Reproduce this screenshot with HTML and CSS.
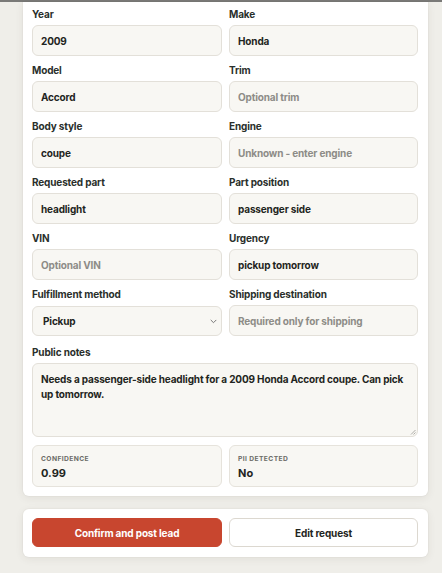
FILE: index.html
```html
<!DOCTYPE html>
<html>
<head>
<meta charset="utf-8">
<link rel="stylesheet" href="styles.css">
</head>
<body>
<div class="topline"></div>
<main class="page">
  <section class="card form-card">
    <div class="grid">
      <div class="field"><label class="label">Year</label><input class="input" value="2009"></div>
      <div class="field"><label class="label">Make</label><input class="input" value="Honda"></div>
      <div class="field"><label class="label">Model</label><input class="input" value="Accord"></div>
      <div class="field"><label class="label">Trim</label><input class="input" placeholder="Optional trim"></div>
      <div class="field"><label class="label">Body style</label><input class="input" value="coupe"></div>
      <div class="field"><label class="label">Engine</label><input class="input" placeholder="Unknown - enter engine"></div>
      <div class="field"><label class="label">Requested part</label><input class="input" value="headlight"></div>
      <div class="field"><label class="label">Part position</label><input class="input" value="passenger side"></div>
      <div class="field"><label class="label">VIN</label><input class="input" placeholder="Optional VIN"></div>
      <div class="field"><label class="label">Urgency</label><input class="input" value="pickup tomorrow"></div>
      <div class="field"><label class="label">Fulfillment method</label>
        <div class="select">
          <span>Pickup</span>
          <svg class="chev" width="7" height="5" viewBox="0 0 7 5"><path d="M1 1.2 L3.5 3.7 L6 1.2" fill="none" stroke="#777" stroke-width="1" stroke-linecap="round" stroke-linejoin="round"/></svg>
        </div>
      </div>
      <div class="field"><label class="label">Shipping destination</label><input class="input" placeholder="Required only for shipping"></div>
      <div class="field full notes"><label class="label">Public notes</label>
        <div class="textarea">Needs a passenger-side headlight for a 2009 Honda Accord coupe. Can pick up tomorrow.
          <svg class="grip" width="6" height="6" viewBox="0 0 6 6"><path d="M5.5 1 L1 5.5 M5.5 3.5 L3.5 5.5" stroke="#9a9a95" stroke-width="0.8"/></svg>
        </div>
      </div>
      <div class="stat"><div class="stat-label">Confidence</div><div class="stat-value">0.99</div></div>
      <div class="stat"><div class="stat-label">PII detected</div><div class="stat-value">No</div></div>
    </div>
  </section>
  <section class="card actions">
    <button class="btn primary">Confirm and post lead</button>
    <button class="btn secondary">Edit request</button>
  </section>
</main>
</body>
</html>
```
FILE: styles.css
```css
* { box-sizing: border-box; }
html, body { margin: 0; padding: 0; }
body {
  background: #efeee9;
  font-family: Inter, "Noto Sans", sans-serif;
  color: #1f2521;
  width: 442px;
  height: 573px;
  overflow: hidden;
}
.topline {
  height: 2px;
  background: #7a7a78;
}
.page {
  padding-left: 23px;
  width: 428px;
}
.card {
  background: #ffffff;
  border-radius: 6px;
  box-shadow: 0 2px 8px rgba(60, 55, 40, 0.08), 0 0 0 1px rgba(0, 0, 0, 0.02);
}
.form-card {
  border-top-left-radius: 0;
  border-top-right-radius: 0;
  padding: 5px 10px 9px 9px;
}
.grid {
  display: grid;
  grid-template-columns: 190px 1fr;
  column-gap: 7px;
  row-gap: 7px;
}
.field {
  display: flex;
  flex-direction: column;
  gap: 4px;
}
.full { grid-column: 1 / -1; }
.notes { margin-top: 2px; }
.label {
  font-size: 10px;
  line-height: 14px;
  font-weight: 700;
  letter-spacing: -0.15px;
  color: #2a2f2b;
}
.input, .select, .textarea {
  height: 31px;
  border: 1px solid #e3e0d9;
  border-radius: 6px;
  background: #f8f7f3;
  font-family: inherit;
  font-size: 10px;
  letter-spacing: -0.15px;
  font-weight: 700;
  color: #1f2521;
  padding: 0 8px;
  width: 100%;
  outline: none;
}
.input::placeholder {
  color: #8d8c87;
  font-weight: 700;
  opacity: 1;
}
.select {
  height: 30px;
  margin-top: 1px;
  display: flex;
  align-items: center;
  justify-content: space-between;
  padding: 0 4px 0 10px;
}
.chev { margin-top: 1px; }
.textarea {
  position: relative;
  height: 74px;
  padding: 8px 8px;
  line-height: 14.5px;
  white-space: normal;
}
.grip {
  position: absolute;
  right: 1px;
  bottom: 1px;
}
.stat {
  margin-top: 1px;
  height: 42px;
  border: 1px solid #e6e3dc;
  border-radius: 6px;
  background: #f8f7f3;
  padding: 9px 8px 0;
}
.stat-label {
  font-size: 6.7px;
  line-height: 9px;
  font-weight: 700;
  letter-spacing: 0.4px;
  text-transform: uppercase;
  color: #6c6c67;
}
.stat-value {
  margin-top: 2px;
  font-size: 11px;
  line-height: 14px;
  font-weight: 700;
  color: #1f2521;
}
.actions {
  margin-top: 13px;
  padding: 9px 10px 10px 9px;
  display: grid;
  grid-template-columns: 190px 1fr;
  column-gap: 7px;
}
.btn {
  height: 29px;
  border-radius: 6px;
  font-family: inherit;
  font-size: 10px;
  letter-spacing: -0.15px;
  font-weight: 700;
  cursor: pointer;
}
.primary {
  background: #c8462f;
  border: 1px solid #c8462f;
  color: #ffffff;
}
.secondary {
  background: #ffffff;
  border: 1px solid #dcd8d0;
  color: #1f2521;
}
```
